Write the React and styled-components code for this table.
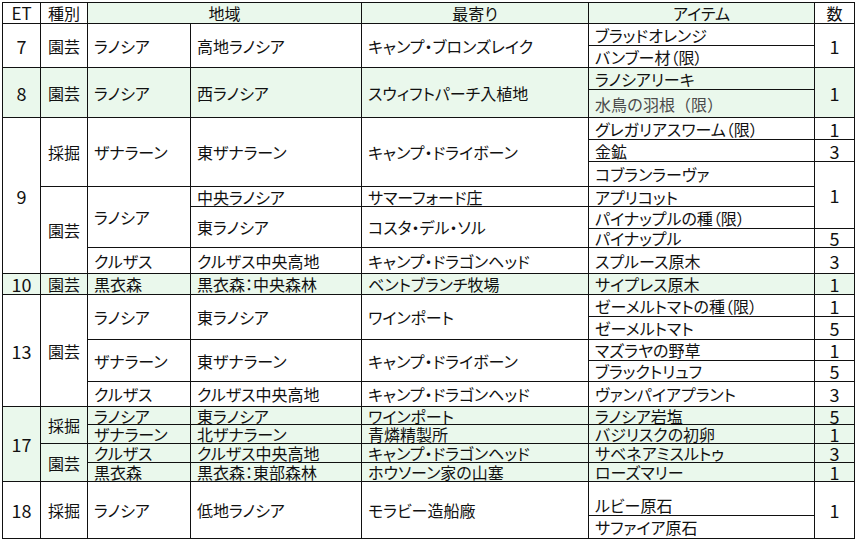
import React from "react";
import styled, { createGlobalStyle } from "styled-components";

const GlobalStyle = createGlobalStyle`
  html, body { margin: 0; padding: 0; background: #fff; }
  body { font-family: "Noto Sans CJK JP", "Noto Sans", sans-serif; }
`;

const Wrap = styled.div`
  padding: 2px 0 0 2px;
`;

const Table = styled.table`
  border-collapse: collapse;
  table-layout: fixed;
  width: 852px;
  font-size: 16px;
  line-height: 16px;
  color: #111;
  font-feature-settings: "palt";
`;

const Col = styled.col`
  width: ${(p) => p.$w}px;
`;

const Row = styled.tr`
  height: ${(p) => p.$h}px;
  & > td, & > th {
    background: ${(p) => (p.$green ? "#eaf8ec" : "#fff")};
  }
`;

const Head = styled.th`
  border: 1px solid #111;
  padding: 0 4px;
  font-weight: 400;
  font-size: ${(p) => (p.$num ? "17px" : "16px")};
  line-height: 16px;
  text-align: center;
  vertical-align: middle;
  white-space: nowrap;
  && { background: ${(p) => (p.$green ? "#eaf8ec" : "#fff")}; }
`;

const Cell = styled.td`
  border: 1px solid #111;
  padding: 0 6px ${(p) => (p.$bottom ? "2px" : "0")};
  vertical-align: ${(p) => (p.$bottom ? "bottom" : "middle")};
  text-align: ${(p) => (p.$center ? "center" : "left")};
  white-space: nowrap;
  font-size: ${(p) => (p.$num ? "18px" : "16px")};
  line-height: 16px;
  color: ${(p) => (p.$muted ? "#4a4a4a" : "#111")};
  font-feature-settings: ${(p) => (p.$muted ? "normal" : "inherit")};
`;

const C = (props) => <Cell $center {...props} />;
const N = (props) => <Cell $center $num {...props} />;

export default function App() {
  return (
    <Wrap>
      <GlobalStyle />
      <Table>
        <colgroup>
          <Col $w={38} />
          <Col $w={47} />
          <Col $w={103} />
          <Col $w={171} />
          <Col $w={227} />
          <Col $w={226} />
          <Col $w={40} />
        </colgroup>
        <thead>
          <Row $h={21}>
            <Head $num>ET</Head>
            <Head>種別</Head>
            <Head $green colSpan={2}>地域</Head>
            <Head $green>最寄り</Head>
            <Head $green>アイテム</Head>
            <Head>数</Head>
          </Row>
        </thead>
        <tbody>
          {/* ET 7 */}
          <Row $h={22}>
            <N rowSpan={2}>7</N>
            <C rowSpan={2}>園芸</C>
            <Cell rowSpan={2}>ラノシア</Cell>
            <Cell rowSpan={2}>高地ラノシア</Cell>
            <Cell rowSpan={2}>キャンプ・ブロンズレイク</Cell>
            <Cell>ブラッドオレンジ</Cell>
            <N rowSpan={2}>1</N>
          </Row>
          <Row $h={22}>
            <Cell>バンブー材（限）</Cell>
          </Row>

          {/* ET 8 */}
          <Row $h={22} $green>
            <N rowSpan={2}>8</N>
            <C rowSpan={2}>園芸</C>
            <Cell rowSpan={2}>ラノシア</Cell>
            <Cell rowSpan={2}>西ラノシア</Cell>
            <Cell rowSpan={2}>スウィフトパーチ入植地</Cell>
            <Cell>ラノシアリーキ</Cell>
            <N rowSpan={2}>1</N>
          </Row>
          <Row $h={28} $green>
            <Cell $muted>水鳥の羽根（限）</Cell>
          </Row>

          {/* ET 9 */}
          <Row $h={22}>
            <N rowSpan={7}>9</N>
            <C rowSpan={3}>採掘</C>
            <Cell rowSpan={3}>ザナラーン</Cell>
            <Cell rowSpan={3}>東ザナラーン</Cell>
            <Cell rowSpan={3}>キャンプ・ドライボーン</Cell>
            <Cell>グレガリアスワーム（限）</Cell>
            <N>1</N>
          </Row>
          <Row $h={22}>
            <Cell>金鉱</Cell>
            <N>3</N>
          </Row>
          <Row $h={25}>
            <Cell>コブランラーヴァ</Cell>
            <N rowSpan={3}>1</N>
          </Row>
          <Row $h={20}>
            <C rowSpan={4}>園芸</C>
            <Cell rowSpan={3}>ラノシア</Cell>
            <Cell>中央ラノシア</Cell>
            <Cell>サマーフォード庄</Cell>
            <Cell>アプリコット</Cell>
          </Row>
          <Row $h={22}>
            <Cell rowSpan={2}>東ラノシア</Cell>
            <Cell rowSpan={2}>コスタ・デル・ソル</Cell>
            <Cell>パイナップルの種（限）</Cell>
          </Row>
          <Row $h={19}>
            <Cell>パイナップル</Cell>
            <N>5</N>
          </Row>
          <Row $h={26}>
            <Cell>クルザス</Cell>
            <Cell>クルザス中央高地</Cell>
            <Cell>キャンプ・ドラゴンヘッド</Cell>
            <Cell>スプルース原木</Cell>
            <N>3</N>
          </Row>

          {/* ET 10 */}
          <Row $h={21} $green>
            <N>10</N>
            <C>園芸</C>
            <Cell>黒衣森</Cell>
            <Cell>黒衣森：中央森林</Cell>
            <Cell>ベントブランチ牧場</Cell>
            <Cell>サイプレス原木</Cell>
            <N>1</N>
          </Row>

          {/* ET 13 */}
          <Row $h={22}>
            <N rowSpan={5}>13</N>
            <C rowSpan={5}>園芸</C>
            <Cell rowSpan={2}>ラノシア</Cell>
            <Cell rowSpan={2}>東ラノシア</Cell>
            <Cell rowSpan={2}>ワインポート</Cell>
            <Cell>ゼーメルトマトの種（限）</Cell>
            <N>1</N>
          </Row>
          <Row $h={23}>
            <Cell>ゼーメルトマト</Cell>
            <N>5</N>
          </Row>
          <Row $h={21}>
            <Cell rowSpan={2}>ザナラーン</Cell>
            <Cell rowSpan={2}>東ザナラーン</Cell>
            <Cell rowSpan={2}>キャンプ・ドライボーン</Cell>
            <Cell>マズラヤの野草</Cell>
            <N>1</N>
          </Row>
          <Row $h={21}>
            <Cell>ブラックトリュフ</Cell>
            <N>5</N>
          </Row>
          <Row $h={25}>
            <Cell>クルザス</Cell>
            <Cell>クルザス中央高地</Cell>
            <Cell>キャンプ・ドラゴンヘッド</Cell>
            <Cell>ヴァンパイアプラント</Cell>
            <N>3</N>
          </Row>

          {/* ET 17 */}
          <Row $h={18} $green>
            <N rowSpan={4}>17</N>
            <C rowSpan={2}>採掘</C>
            <Cell>ラノシア</Cell>
            <Cell>東ラノシア</Cell>
            <Cell>ワインポート</Cell>
            <Cell>ラノシア岩塩</Cell>
            <N>5</N>
          </Row>
          <Row $h={19} $green>
            <Cell>ザナラーン</Cell>
            <Cell>北ザナラーン</Cell>
            <Cell>青燐精製所</Cell>
            <Cell>バジリスクの初卵</Cell>
            <N>1</N>
          </Row>
          <Row $h={19} $green>
            <C rowSpan={2}>園芸</C>
            <Cell>クルザス</Cell>
            <Cell>クルザス中央高地</Cell>
            <Cell>キャンプ・ドラゴンヘッド</Cell>
            <Cell>サベネアミスルトゥ</Cell>
            <N>3</N>
          </Row>
          <Row $h={19} $green>
            <Cell>黒衣森</Cell>
            <Cell>黒衣森：東部森林</Cell>
            <Cell>ホウソーン家の山塞</Cell>
            <Cell>ローズマリー</Cell>
            <N>1</N>
          </Row>

          {/* ET 18 */}
          <Row $h={34}>
            <N rowSpan={2}>18</N>
            <C rowSpan={2}>採掘</C>
            <Cell rowSpan={2}>ラノシア</Cell>
            <Cell rowSpan={2}>低地ラノシア</Cell>
            <Cell rowSpan={2}>モラビー造船廠</Cell>
            <Cell $bottom>ルビー原石</Cell>
            <N rowSpan={2}>1</N>
          </Row>
          <Row $h={23}>
            <Cell>サファイア原石</Cell>
          </Row>
        </tbody>
      </Table>
    </Wrap>
  );
}
